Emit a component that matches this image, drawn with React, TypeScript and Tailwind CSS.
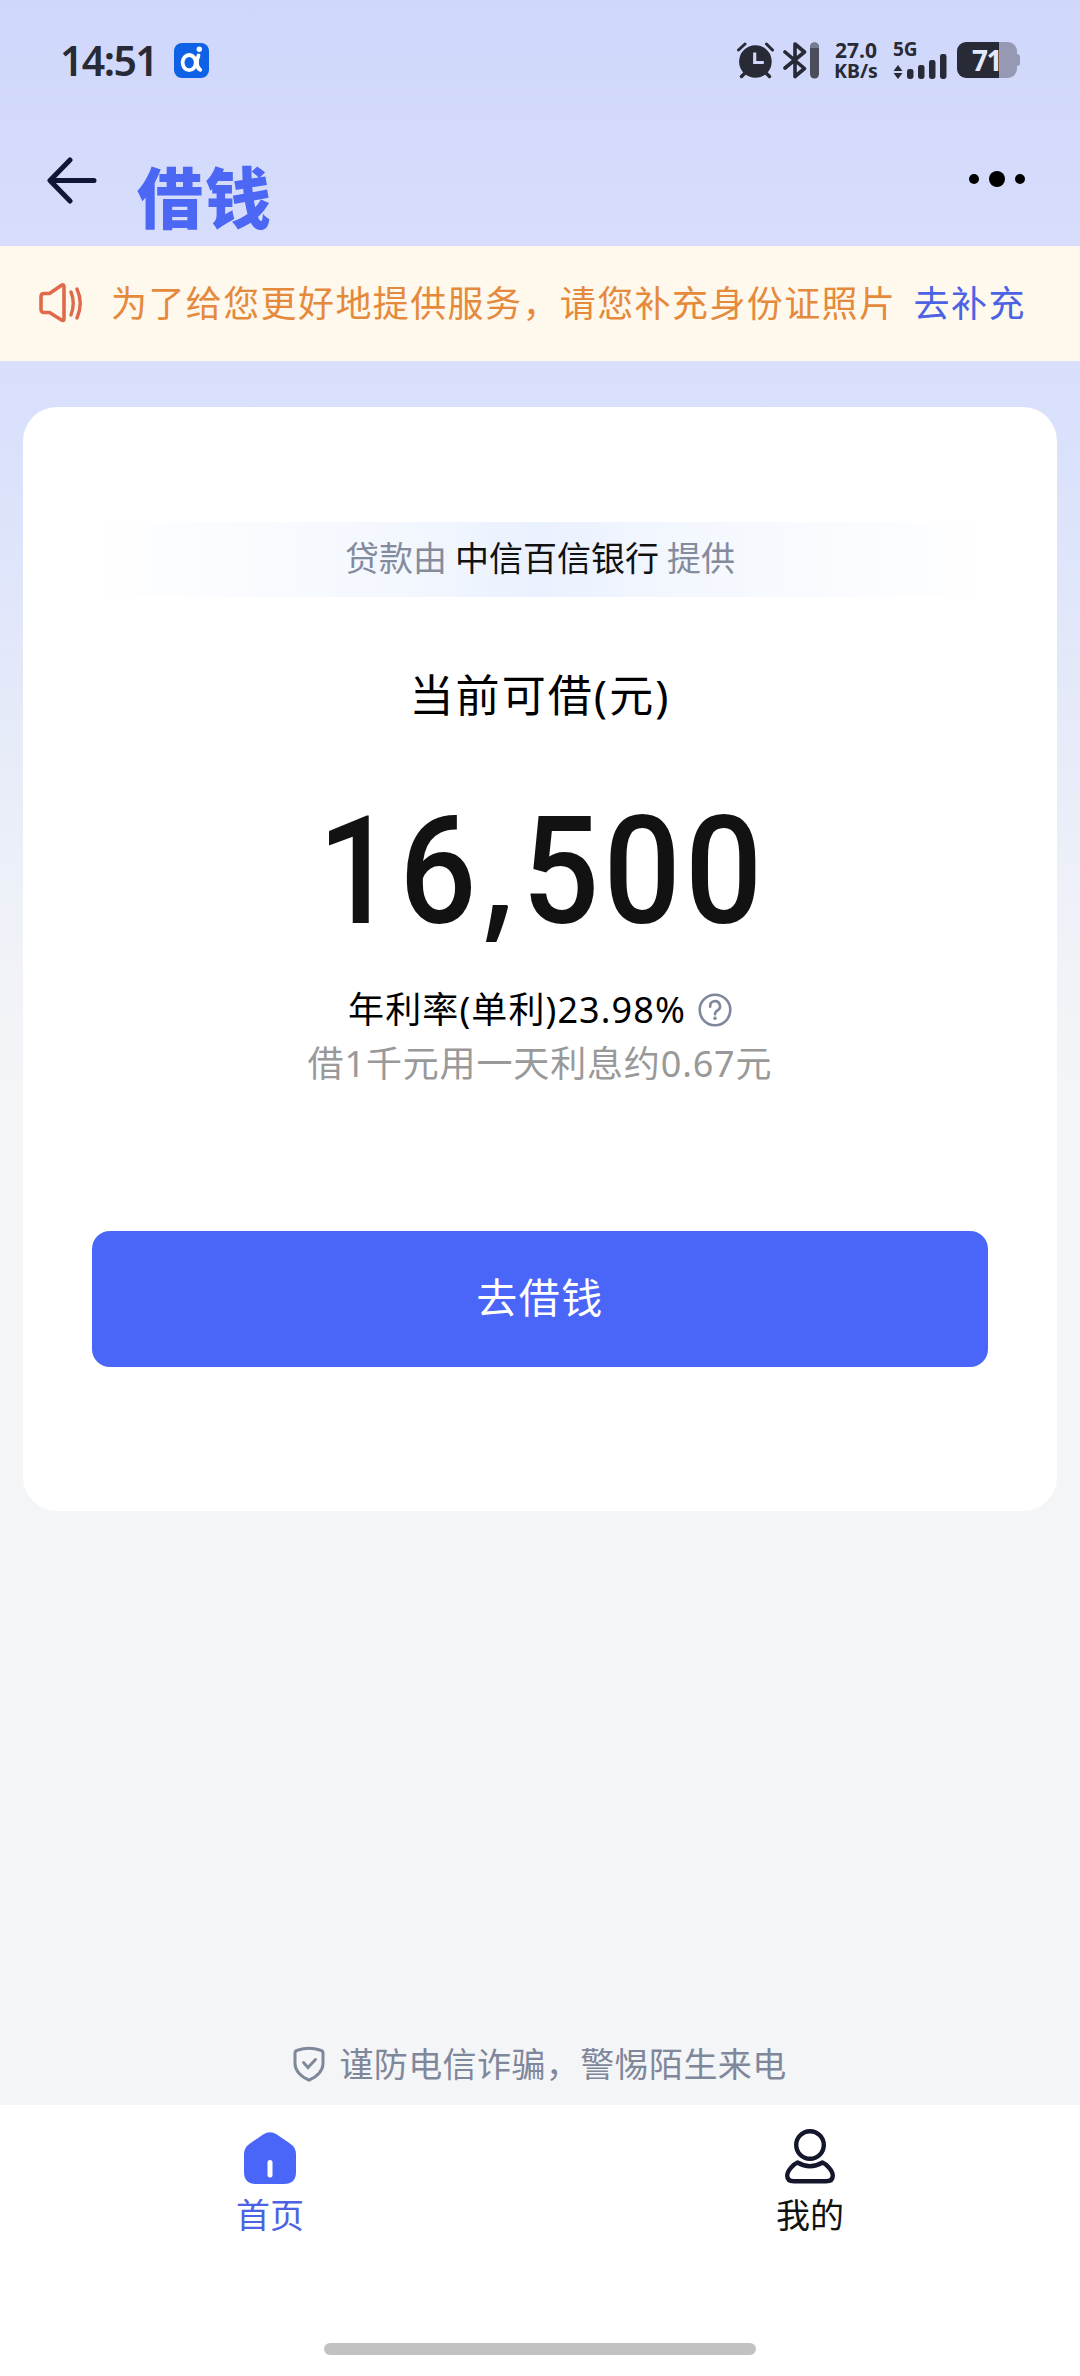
import React, { useState } from 'react';
import { clsx } from 'clsx';

function AppBadge() {
  return (
    <svg width="35" height="35" viewBox="0 0 35 35" fill="none">
      <rect width="35" height="35" rx="8" fill="#0F62E6" />
      <ellipse cx="15.2" cy="19.6" rx="6.6" ry="7.6" stroke="#fff" strokeWidth="3.8" />
      <path d="M24.5 12.5C22.5 17 22 25 26.3 26.8" stroke="#fff" strokeWidth="3.8" strokeLinecap="round" />
      <circle cx="25.3" cy="6.3" r="2.7" fill="#fff" />
    </svg>
  );
}

function AlarmIcon() {
  return (
    <svg width="37" height="37" viewBox="0 0 37 37" fill="none">
      <path d="M1.5 8L8 2M29.5 2L35.5 8" stroke="#282A36" strokeWidth="3" strokeLinecap="round" />
      <path d="M8 31L4.5 34.5M29 31L32.5 34.5" stroke="#282A36" strokeWidth="3.4" strokeLinecap="round" />
      <circle cx="18.4" cy="19.5" r="16.3" fill="#282A36" />
      <path d="M17.7 10.5V20.5H26.8" stroke="#D0D7FB" strokeWidth="3.2" />
    </svg>
  );
}

function BluetoothIcon() {
  return (
    <svg width="37" height="37" viewBox="0 0 37 37" fill="none">
      <path
        d="M2 10L21.5 26.5L12 34.5V2L21.5 10L2 26"
        stroke="#282A36"
        strokeWidth="3.6"
        strokeLinejoin="round"
        strokeLinecap="round"
      />
      <rect x="27" y="0.5" width="9" height="36" rx="4.5" fill="#4B4D5A" />
      <path d="M27 6V5a4.5 4.5 0 0 1 9 0v1z" fill="#777C93" />
    </svg>
  );
}

function SignalIcon() {
  return (
    <svg width="55" height="26" viewBox="0 0 55 26" fill="#282A36">
      <path d="M5 12L9.5 18H0.5zM5 26L0.5 20H9.5z" />
      <rect x="14" y="16" width="6.5" height="10" rx="2.4" />
      <rect x="25" y="12" width="6.5" height="14" rx="2.4" />
      <rect x="36" y="7" width="6.5" height="19" rx="2.4" />
      <rect x="47" y="1" width="6.5" height="25" rx="2.4" />
    </svg>
  );
}

function StatusBar() {
  return (
    <div className="flex h-[120px] items-center pl-[60px] pr-[60px] text-[#282A36]">
      <span className="w-[98px] text-[41px] leading-none font-semibold tracking-[-1.6px]">14:51</span>
      <div className="ml-[16px]">
        <AppBadge />
      </div>
      <div className="ml-auto flex items-center">
        <AlarmIcon />
        <div className="ml-[9px]">
          <BluetoothIcon />
        </div>
        <div className="ml-[13px] flex w-[46px] flex-col items-center font-bold">
          <div className="text-[21px] leading-[21px]">27.0</div>
          <div className="text-[19.5px] leading-[20px]">KB/s</div>
        </div>
        <div className="ml-[14px] flex h-[38px] w-[55px] flex-col">
          <span className="h-[12px] text-[19px] leading-[16px] font-bold">5G</span>
          <SignalIcon />
        </div>
        <div className="ml-[9px] flex items-center">
          <div className="flex h-[36px] w-[60px] items-center overflow-hidden rounded-[9px] bg-[linear-gradient(90deg,#282A36_70%,#9599B3_70%)] pl-[15px]">
            <span className="text-[28px] leading-none font-bold tracking-[-1.5px] text-[#E4E8FD]">71</span>
          </div>
          <div className="h-[12px] w-[3px] rounded-r-[3px] bg-[#9599B3]" />
        </div>
      </div>
    </div>
  );
}

function NavBar() {
  return (
    <div className="flex h-[126px] items-start pl-[47px] pr-[55px]">
      <svg className="mt-[37px]" width="51" height="47" viewBox="0 0 51 47" fill="none">
        <path
          d="M23 3L3 23.5L23 44M4 23.5H47"
          stroke="#0F1735"
          strokeWidth="5"
          strokeLinecap="round"
          strokeLinejoin="round"
        />
      </svg>
      <h1 className="mt-[41px] ml-[39px] text-[66px] leading-[72px] font-black tracking-[2px] text-[#4B67F4]">借钱</h1>
      <div className="mt-[51px] ml-auto flex items-center gap-[10px]">
        <span className="h-[10px] w-[10px] rounded-full bg-black" />
        <span className="h-[16px] w-[16px] rounded-full bg-black" />
        <span className="h-[10px] w-[10px] rounded-full bg-black" />
      </div>
    </div>
  );
}

function NoticeBar() {
  return (
    <div className="flex h-[115px] items-center bg-[#FEF8ED] pl-[39px] text-[36px] leading-[50px] whitespace-nowrap">
      <svg className="-mt-[1px]" width="44" height="40" viewBox="0 0 44 40" fill="none">
        <path
          d="M2 14Q2 10.5 5 10.5H10.5L22.5 2.3Q25 1 25 4V35.5Q25 38.5 22.5 37L10.5 29.5H5Q2 29.5 2 26z"
          stroke="#E0694C"
          strokeWidth="3.6"
          strokeLinejoin="round"
        />
        <path d="M32 9Q36.5 20 32 32M38 6Q44.5 20 38 35" stroke="#E0694C" strokeWidth="3.4" strokeLinecap="round" />
      </svg>
      <span className="ml-[28px] tracking-[1.4px] text-[#E58A3C]">为了给您更好地提供服务，请您补充身份证照片</span>
      <a className="ml-[17px] tracking-[1.6px] text-[#4A62E3]">去补充</a>
    </div>
  );
}

function LoanCard() {
  return (
    <section className="mx-[23px] mt-[46px] flex h-[1104px] flex-col items-center rounded-[34px] bg-white px-[69px] pt-[115px] whitespace-nowrap">
      <div className="flex h-[75px] w-full items-center justify-center bg-[linear-gradient(90deg,#ffffff,#F3F7FE_35%,#EAF1FE_50%,#F3F7FE_65%,#ffffff)] pb-[3px] text-[34px] leading-[48px] text-[#848B9C]">
        贷款由<span className="mx-[8px] text-[#111111]">中信百信银行</span>提供
      </div>
      <div className="mt-[68px] text-[44px] leading-[60px] tracking-[2.1px] text-black">当前可借(元)</div>
      <div className="mt-[72px] h-[150px] origin-center scale-x-90 pl-[4px] font-['Roboto'] text-[151px] leading-[150px] font-medium tracking-[4.7px] text-[#121212]">
        16<span className="font-['Noto_Sans'] leading-[100px]">,</span>500
      </div>
      <div className="mt-[36px] flex items-center text-[36px] leading-[54px] text-black">
        <span className="tracking-[1.1px]">年利率(单利)23.98%</span>
        <svg className="ml-[12px]" width="34" height="34" viewBox="0 0 34 34" fill="none">
          <circle cx="17" cy="17" r="15.3" stroke="#7F879C" strokeWidth="2.6" />
          <path
            d="M12.2 13.6A4.9 4.9 0 1 1 19.6 17.3Q17 18.9 17 21.3"
            stroke="#7F879C"
            strokeWidth="2.6"
            strokeLinecap="round"
          />
          <circle cx="17" cy="25.3" r="1.7" fill="#7F879C" />
        </svg>
      </div>
      <div className="text-[36px] leading-[54px] tracking-[0.85px] text-[#999999]">借1千元用一天利息约0.67元</div>
      <button className="mt-[140px] h-[136px] w-full shrink-0 rounded-[18px] bg-[#4966F8] pb-[3px] text-[41px] tracking-[1.5px] text-white">
        去借钱
      </button>
    </section>
  );
}

function HomeIcon() {
  return (
    <svg width="52" height="52" viewBox="0 0 52 52" fill="none">
      <path
        d="M19.5 2.2Q26 -1.6 32.5 2.2L46 11.5Q52 15.5 52 22V40Q52 52 40 52H12Q0 52 0 40V22Q0 15.5 6 11.5z"
        fill="#4966F8"
      />
      <path d="M26 30.5V43" stroke="#fff" strokeWidth="5" strokeLinecap="round" />
    </svg>
  );
}

function UserIcon() {
  return (
    <svg width="50" height="55" viewBox="0 0 50 55" fill="none">
      <circle cx="25" cy="16" r="13.8" stroke="#14172B" strokeWidth="4.4" />
      <path
        d="M12.5 33.5Q25 41 37.5 33.5C41.5 35 47.8 42 47.8 46.5Q47.8 52.3 41 52.3H9Q2.2 52.3 2.2 46.5C2.2 42 8.5 35 12.5 33.5z"
        stroke="#14172B"
        strokeWidth="4.4"
        strokeLinejoin="round"
      />
    </svg>
  );
}

const TABS = [
  { key: 'home', label: '首页', icon: <HomeIcon /> },
  { key: 'mine', label: '我的', icon: <UserIcon /> },
];

export default function App() {
  const [activeTab, setActiveTab] = useState('home');

  return (
    <div className="flex h-[2376px] w-[1080px] flex-col overflow-hidden bg-[linear-gradient(180deg,#CFD7FB_0px,#D7DDFB_246px,#DAE1FB_450px,#E4E9F9_680px,#EEF1F8_900px,#F4F5F7_1090px)] font-['Noto_Sans','Noto_Sans_CJK_SC',sans-serif]">
      <StatusBar />
      <NavBar />
      <NoticeBar />
      <LoanCard />

      <div className="mt-auto mb-[17px] flex items-center justify-center text-[34px] leading-[48px] text-[#7F879B]">
        <svg className="mr-[14px]" width="32" height="36" viewBox="0 0 32 36" fill="none">
          <path
            d="M2 7Q2 4.8 4.5 4.2Q16 0.5 27.500 4.2Q30 4.8 30 7V18Q29.5 28 16 34.2Q2.5 28 2 18z"
            stroke="#7F879B"
            strokeWidth="3"
            strokeLinejoin="round"
          />
          <path d="M10.5 16.5L15 21.5L22.5 13.5" stroke="#7F879B" strokeWidth="3" strokeLinecap="round" />
        </svg>
        <span className="tracking-[0.4px]">谨防电信诈骗，警惕陌生来电</span>
      </div>

      <nav className="flex h-[271px] shrink-0 flex-col bg-white">
        <div className="grid grid-cols-2">
          {TABS.map(tab => (
            <button
              key={tab.key}
              onClick={() => setActiveTab(tab.key)}
              className={clsx(
                'flex flex-col items-center pt-[23px] text-[34px] leading-[48px]',
                tab.key === activeTab ? 'text-[#4A62E3]' : 'text-[#111111]'
              )}
            >
              <div className="flex h-[56px] items-end">{tab.icon}</div>
              <span className="mt-[7px]">{tab.label}</span>
            </button>
          ))}
        </div>
        <div className="mx-auto mt-auto mb-[21px] h-[12px] w-[432px] rounded-full bg-[#C2C2C2]" />
      </nav>
    </div>
  );
}
